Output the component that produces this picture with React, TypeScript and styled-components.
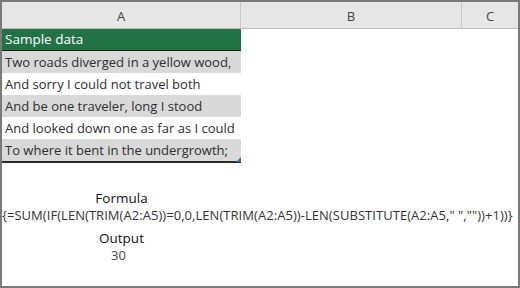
import React from "react";
import styled, { createGlobalStyle } from "styled-components";

const Global = createGlobalStyle`
  html, body { margin: 0; padding: 0; background: #fff; }
  body { font-family: "Open Sans", "Noto Sans", sans-serif; }
`;

const Frame = styled.div`
  width: 520px;
  height: 288px;
  box-sizing: border-box;
  border: 2px solid #7a7a7a;
  background: #fff;
  overflow: hidden;
  position: relative;
`;

const HeaderRow = styled.div`
  display: grid;
  grid-template-columns: 239px 221px 1fr;
  height: 26px;
  background: #e6e6e6;
  border-bottom: 1px solid #bcbcbc;
`;

const HeaderCell = styled.div<{ $last?: boolean }>`
  display: flex;
  align-items: center;
  justify-content: center;
  font-size: 13px;
  color: #444;
  position: relative;
  border-right: ${(p) => (p.$last ? "none" : "1px solid #c8c8c8")};
  padding-top: 2px;
`;

const Table = styled.div`
  width: 239px;
  display: flex;
  flex-direction: column;
`;

const TitleCell = styled.div`
  height: 21px;
  background: #217346;
  color: #fff;
  font-size: 13.5px;
  line-height: 21px;
  padding-left: 3px;
  border-bottom: 1px solid #1a1a1a;
`;

const DataCell = styled.div<{ $shade: boolean; $last?: boolean }>`
  height: 22px;
  line-height: 22px;
  background: ${(p) => (p.$shade ? "#d9d9d9" : "#fff")};
  color: #2e2e2e;
  font-size: 13px;
  padding-left: 3px;
  white-space: nowrap;
  position: relative;
  border-bottom: ${(p) => (p.$last ? "2px solid #2a2a2a" : "none")};
`;

const Handle = styled.span`
  position: absolute;
  right: 0;
  bottom: -1px;
  width: 0;
  height: 0;
  border-left: 5px solid transparent;
  border-bottom: 5px solid #3b6fc4;
`;

const FormulaBlock = styled.div`
  margin-top: 26px;
  display: flex;
  flex-direction: column;
`;

const Label = styled.div<{ $gap?: number }>`
  width: 239px;
  margin-top: ${(p) => p.$gap ?? 0}px;
  text-align: center;
  font-size: 13.5px;
  color: #111;
  height: 18px;
  line-height: 18px;
`;

const FormulaText = styled.div`
  font-size: 13px;
  color: #333;
  height: 16px;
  line-height: 16px;
  white-space: nowrap;
  letter-spacing: 0.05px;
`;

const Value = styled.div`
  width: 233px;
  text-align: center;
  font-size: 13px;
  color: #444;
  height: 16px;
  line-height: 16px;
`;

const rows = [
  "Two roads diverged in a yellow wood,",
  "And sorry I could not travel both",
  "And be one traveler, long I stood",
  "And looked down one as far as I could",
  "To where it bent in the undergrowth;",
];

export default function App() {
  return (
    <>
      <Global />
      <Frame>
        <HeaderRow>
          <HeaderCell>A</HeaderCell>
          <HeaderCell>B</HeaderCell>
          <HeaderCell $last>C</HeaderCell>
        </HeaderRow>
        <Table>
          <TitleCell>Sample data</TitleCell>
          {rows.map((r, i) => (
            <DataCell key={i} $shade={i % 2 === 0} $last={i === rows.length - 1}>
              {r}
              {i === rows.length - 1 && <Handle />}
            </DataCell>
          ))}
        </Table>
        <FormulaBlock>
          <Label>Formula</Label>
          <FormulaText>
            {'{=SUM(IF(LEN(TRIM(A2:A5))=0,0,LEN(TRIM(A2:A5))-LEN(SUBSTITUTE(A2:A5," ",""))+1))}'}
          </FormulaText>
          <Label $gap={6}>Output</Label>
          <Value>30</Value>
        </FormulaBlock>
      </Frame>
    </>
  );
}
